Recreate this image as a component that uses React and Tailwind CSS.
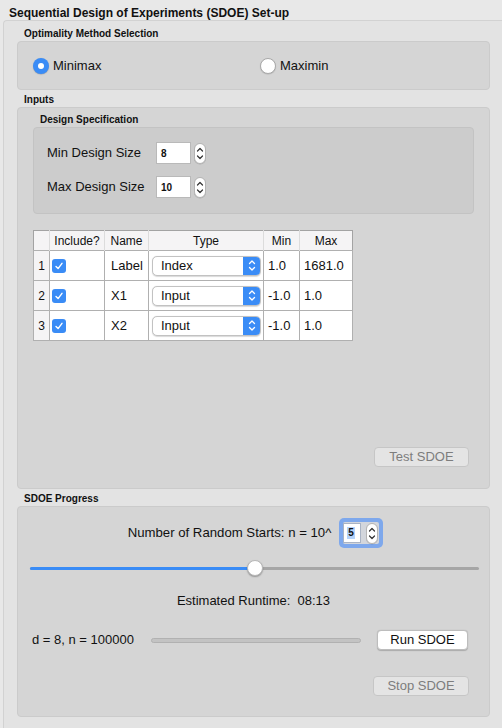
import React from 'react';

const GroupLabel = ({ children, className }) => (
    <div className={`pl-[7px] text-[10px] leading-[14px] font-bold text-[#111] ${className}`}>{children}</div>
);

const Stepper = ({ className = '' }) => (
    <div className={`w-[12px] h-[21px] rounded-[6px] border border-[#b4b4b4] bg-white flex items-center justify-center shadow-[0_0.5px_0.5px_rgba(0,0,0,0.15)] ${className}`}>
        <svg width="8" height="15" viewBox="0 0 8 15" fill="none" stroke="#333" strokeWidth="1.2" strokeLinecap="round" strokeLinejoin="round">
            <path d="M1.5 5 L4 2.5 L6.5 5" />
            <path d="M1.5 10 L4 12.5 L6.5 10" />
        </svg>
    </div>
);

const Radio = ({ checked, label }) => (
    <div className="flex items-center gap-[4px]">
        {checked ? (
            <div className="w-4 h-4 rounded-full bg-[#3a8cf6] flex items-center justify-center shadow-[0_0.5px_1px_rgba(0,0,0,0.25)]">
                <div className="w-[6px] h-[6px] rounded-full bg-white" />
            </div>
        ) : (
            <div className="w-4 h-4 rounded-full bg-white border border-[#a9a9a9] shadow-[0_0.5px_1px_rgba(0,0,0,0.15)]" />
        )}
        <span className="text-[13px] leading-[16px]">{label}</span>
    </div>
);

const Check = () => (
    <div className="w-[14px] h-[14px] rounded-[3px] bg-[#3a8cf6] flex items-center justify-center">
        <svg width="10" height="10" viewBox="0 0 10 10" fill="none" stroke="white" strokeWidth="1.4" strokeLinecap="round" strokeLinejoin="round">
            <path d="M2 5.4 L4.1 7.6 L8 2.3" />
        </svg>
    </div>
);

const Select = ({ value }) => (
    <div className="w-[109px] h-[20px] rounded-[5px] bg-white border border-[#c2c2c2] shadow-[0_0.5px_1px_rgba(0,0,0,0.15)] flex items-center overflow-hidden">
        <span className="flex-1 pl-[8px] text-[13px] leading-[16px]">{value}</span>
        <div className="w-[17px] h-full bg-[#3a8cf6] flex items-center justify-center">
            <svg width="8" height="13" viewBox="0 0 8 13" fill="none" stroke="white" strokeWidth="1.3" strokeLinecap="round" strokeLinejoin="round">
                <path d="M1.5 4.5 L4 2 L6.5 4.5" />
                <path d="M1.5 8.5 L4 11 L6.5 8.5" />
            </svg>
        </div>
    </div>
);

const Button = ({ children, disabled, className = '' }) => (
    <div className={`h-[20px] rounded-[4px] border flex items-center justify-center text-[13px] leading-[16px] ${disabled ? 'bg-[#e4e4e4] border-[#c6c6c6] text-[#7d7d7d]' : 'bg-white border-[#bdbdbd] text-[#111] shadow-[0_0.5px_1px_rgba(0,0,0,0.2)]'} ${className}`}>
        {children}
    </div>
);

const rows = [
    { n: 1, name: 'Label', type: 'Index', min: '1.0', max: '1681.0' },
    { n: 2, name: 'X1', type: 'Input', min: '-1.0', max: '1.0' },
    { n: 3, name: 'X2', type: 'Input', min: '-1.0', max: '1.0' },
];

export default function App() {
    return (
        <div className="w-[502px] h-[728px] bg-[#e8e8e8] overflow-hidden flex flex-col font-['Liberation_Sans',Arial,sans-serif] text-[#111]">
            <div className="h-[20px] pl-[9px] pt-[6px] text-[12px] leading-[14px] font-bold">Sequential Design of Experiments (SDOE) Set-up</div>

            <div className="flex-1 ml-[3px] border-l border-t border-[#d2d2d2] rounded-tl-[4px] bg-[#e3e3e3] pl-[13px] pr-[12px] flex flex-col">
                <GroupLabel className="h-[20px] pt-[6px]">Optimality Method Selection</GroupLabel>
                <div className="h-[49px] rounded-[4px] border border-[#cbcbcb] bg-[#d5d5d5] flex items-center pl-[15px]">
                    <div className="w-[227px]"><Radio checked label="Minimax" /></div>
                    <Radio label="Maximin" />
                </div>

                <GroupLabel className="h-[17px] pt-[3px]">Inputs</GroupLabel>
                <div className="h-[382px] rounded-[4px] border border-[#cbcbcb] bg-[#d5d5d5] px-[15px] flex flex-col">
                    <GroupLabel className="h-[19px] pt-[5px]">Design Specification</GroupLabel>
                    <div className="h-[87px] rounded-[4px] border border-[#c3c3c3] bg-[#cccccc] pl-[13px] pt-[14px] flex flex-col gap-[12px]">
                        {[['Min Design Size', '8'], ['Max Design Size', '10']].map(([label, v]) => (
                            <div key={label} className="flex items-center h-[22px]">
                                <span className="w-[109px] text-[13px] leading-[16px]">{label}</span>
                                <div className="w-[35px] h-[22px] bg-white border border-[#b9b9b9] flex items-center pl-[4px] text-[10px] font-bold">{v}</div>
                                <Stepper className="ml-[3px]" />
                            </div>
                        ))}
                    </div>

                    <table className="mt-[16px] w-[319px] border-collapse border border-[#a3a3a3] bg-white table-fixed">
                        <colgroup>
                            <col className="w-[16px]" />
                            <col className="w-[55px]" />
                            <col className="w-[44px]" />
                            <col className="w-[115px]" />
                            <col className="w-[36px]" />
                            <col className="w-[53px]" />
                        </colgroup>
                        <thead>
                            <tr className="h-[20px] bg-[#f5f4f5] text-[12px] leading-[14px] font-normal">
                                <th className="font-normal border-r border-[#dcdcdc]"></th>
                                <th className="font-normal border-r border-[#dcdcdc]">Include?</th>
                                <th className="font-normal border-r border-[#dcdcdc]">Name</th>
                                <th className="font-normal border-r border-[#dcdcdc]">Type</th>
                                <th className="font-normal border-r border-[#dcdcdc]">Min</th>
                                <th className="font-normal">Max</th>
                            </tr>
                        </thead>
                        <tbody>
                            {rows.map((r) => (
                                <tr key={r.n} className="h-[30px] text-[13px] leading-[16px]">
                                    <td className="bg-[#f5f4f5] border border-[#b0b0b0] text-center text-[12px]">{r.n}</td>
                                    <td className="border border-[#b0b0b0] pl-[2px]"><Check /></td>
                                    <td className="border border-[#b0b0b0] pl-[6px]">{r.name}</td>
                                    <td className="border border-[#b0b0b0] pl-[3px]"><Select value={r.type} /></td>
                                    <td className="border border-[#b0b0b0] pl-[4px]">{r.min}</td>
                                    <td className="border border-[#b0b0b0] pl-[4px]">{r.max}</td>
                                </tr>
                            ))}
                        </tbody>
                    </table>

                    <div className="flex-1" />
                    <Button disabled className="self-end w-[95px] mr-[5px] mb-[21px]">Test SDOE</Button>
                </div>

                <GroupLabel className="h-[17px] pt-[3px]">SDOE Progress</GroupLabel>
                <div className="h-[211px] rounded-[4px] border border-[#cbcbcb] bg-[#d5d5d5] flex flex-col">
                    <div className="mt-[11px] pl-[4px] flex items-center justify-center gap-[8px]">
                        <span className="text-[13.2px] leading-[16px]">Number of Random Starts: n = 10^</span>
                        <div className="h-[30px] rounded-[5px] bg-[#7ea8ec] p-[4px] flex">
                            <div className="flex items-center gap-[5px] bg-[#d3d6dc] rounded-[2px] pr-[1px]">
                                <div className="w-[18px] h-[20px] bg-white border border-[#a9b3c4] flex items-center pl-[3px]">
                                    <span className="bg-[#b4d3fb] text-[10px] leading-[12px] font-bold px-[1px]">5</span>
                                </div>
                                <Stepper />
                            </div>
                        </div>
                    </div>

                    <div className="relative mt-[12px] ml-[12px] mr-[10px] h-[16px] flex items-center">
                        <div className="w-full h-[3px] rounded-full bg-[#a6a6a6] flex">
                            <div className="w-[50.2%] h-full rounded-full bg-[#3a8cf6]" />
                        </div>
                        <div className="absolute left-[calc(50.2%-8px)] top-0 w-4 h-4 rounded-full bg-white border border-[#b8b8b8] shadow-[0_1px_1.5px_rgba(0,0,0,0.3)]" />
                    </div>

                    <div className="mt-[17px] text-center text-[13px] leading-[16px] whitespace-pre">Estimated Runtime:  08:13</div>

                    <div className="mt-[21px] h-[20px] flex items-center pl-[14px]">
                        <span className="w-[119px] text-[13px] leading-[16px]">d = 8, n = 100000</span>
                        <div className="w-[210px] h-[5px] rounded-full bg-[#c3c3c3] border border-[#b1b1b1]" />
                        <Button className="ml-[16px] w-[91px]">Run SDOE</Button>
                    </div>

                    <Button disabled className="self-end mt-[26px] mr-[20px] w-[96px]">Stop SDOE</Button>
                </div>
            </div>
        </div>
    );
}
